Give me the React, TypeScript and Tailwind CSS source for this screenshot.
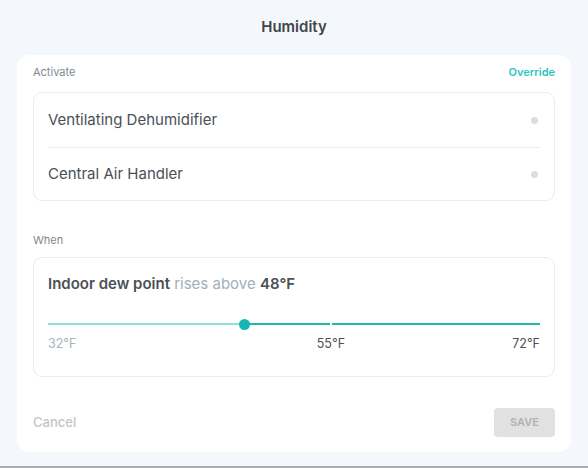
import React from "react";

const devices = ["Ventilating Dehumidifier", "Central Air Handler"];

function DewPointSlider({ min, max, value, mid }: { min: number; max: number; value: number; mid: number }) {
  const pct = ((value - min) / (max - min)) * 100;
  const midPct = ((mid - min) / (max - min)) * 100;
  return (
    <div>
      <div className="relative h-[10px]">
        <div className="absolute left-0 right-0 top-[4px] h-[2px] bg-[#20b9b1]" />
        <div className="absolute left-0 top-[4px] h-[2px] bg-[#93dfda]" style={{ width: `${pct}%` }} />
        <div className="absolute top-[3px] h-[4px] w-[2px] bg-white" style={{ left: `calc(${midPct}% - 1px)` }} />
        <div
          className="absolute top-0 h-[11px] w-[11px] rounded-full bg-[#14b8b0]"
          style={{ left: `calc(${pct}% - 5.5px)` }}
        />
      </div>
      <div className="relative mt-[7px] h-[16px] text-[12.5px] leading-[16px]">
        <span className="absolute left-0 text-[#a9b4bb]">{min}°F</span>
        <span className="absolute -translate-x-1/2 text-[#4b5156]" style={{ left: `${midPct}%` }}>
          {mid}°F
        </span>
        <span className="absolute right-0 text-[#4b5156]">{max}°F</span>
      </div>
    </div>
  );
}

export default function App() {
  return (
    <div
      className="flex h-[468px] w-[588px] flex-col border-b-2 border-[#a9adb1] bg-[#f4f7fb]"
      style={{ fontFamily: "Inter, 'Open Sans', sans-serif" }}
    >
      <div className="flex h-[55px] justify-center pt-[17px]">
        <h1 className="text-[15px] font-semibold leading-[20px] text-[#3f4549]">Humidity</h1>
      </div>

      <div className="mx-[17px] flex h-[397px] flex-col rounded-[12px] bg-white px-4 pt-2">
        <div className="flex h-[18px] items-center justify-between">
          <span className="text-[11px] text-[#80898f]">Activate</span>
          <span className="text-[11px] font-semibold text-[#2ec3bd]">Override</span>
        </div>

        <div className="mt-[11px] rounded-[9px] border border-[#e7edf1]">
          {devices.map((name, i) => (
            <div key={name}>
              {i > 0 && <div className="mx-[14px] h-px bg-[#e5edf1]" />}
              <div className={`flex items-center justify-between pl-[14px] pr-[16px] ${i === 0 ? "h-[54px]" : "h-[52px]"}`}>
                <span className="text-[15px] text-[#4a5055]">{name}</span>
                <span className="h-[7px] w-[7px] rounded-full bg-[#d7dfe6]" />
              </div>
            </div>
          ))}
        </div>

        <div className="mt-[31px] text-[11px] leading-[16px] text-[#80898f]">When</div>

        <div className="mt-[9px] h-[120px] rounded-[9px] border border-[#e7edf1] px-[14px] pt-[16px]">
          <p className="text-[15px] leading-[20px]">
            <span className="font-semibold text-[#4a5055]">Indoor dew point</span>
            <span className="text-[#a3afb7]"> rises above </span>
            <span className="font-semibold text-[#4a5055]">48°F</span>
          </p>
          <div className="mt-[25px]">
            <DewPointSlider min={32} max={72} value={48} mid={55} />
          </div>
        </div>

        <div className="mt-[31px] flex items-center justify-between">
          <button className="text-[13px] font-medium text-[#c2c6c9]">Cancel</button>
          <button className="h-[29px] w-[61px] rounded-[4px] bg-[#e1e1e1] text-[11px] font-semibold text-[#b2b2b2]">
            SAVE
          </button>
        </div>
      </div>
    </div>
  );
}
